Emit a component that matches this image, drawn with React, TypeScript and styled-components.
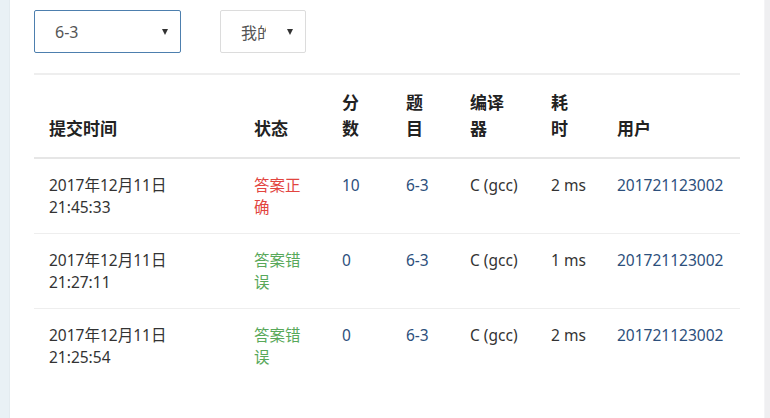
import React from "react";
import styled, { createGlobalStyle } from "styled-components";

const GlobalStyle = createGlobalStyle`
  html, body {
    margin: 0;
    padding: 0;
    background: #ffffff;
  }
  body {
    font-family: "Noto Sans", "Noto Sans CJK SC", sans-serif;
    color: #333;
  }
`;

const Page = styled.div`
  display: flex;
  width: 770px;
  height: 418px;
  overflow: hidden;
`;

const LeftRail = styled.div`
  width: 9px;
  flex-shrink: 0;
  background: #e9f1f5;
  border-right: 1px solid #e3ebef;
`;

const RightRail = styled.div`
  width: 5px;
  flex-shrink: 0;
  background: #efeff1;
  border-left: 1px solid #f4f4f6;
`;

const Card = styled.main`
  flex: 1;
  background: #fff;
  padding: 10px 24px 0 24px;
`;

const Filters = styled.div`
  display: flex;
  align-items: center;
  gap: 39px;
  height: 43px;
  margin-bottom: 20px;
`;

const Select = styled.div<{ $w: number; $active?: boolean }>`
  box-sizing: border-box;
  width: ${(p) => p.$w}px;
  height: 43px;
  display: flex;
  align-items: center;
  justify-content: space-between;
  padding: 0 10px 0 20px;
  border: 1px solid ${(p) => (p.$active ? "#4d7fae" : "#dcdcdc")};
  border-radius: 2px;
  font-size: 16px;
  color: #555;
`;

const SelectText = styled.span<{ $clip?: number }>`
  display: inline-block;
  white-space: nowrap;
  overflow: hidden;
  ${(p) => (p.$clip ? `width: ${p.$clip}px;` : "")}
`;

const Caret = styled.span`
  width: 0;
  height: 0;
  border-left: 3.5px solid transparent;
  border-right: 3.5px solid transparent;
  border-top: 6px solid #333;
  margin-right: 2px;
  margin-top: 1px;
`;

const Table = styled.table`
  width: 706px;
  border-collapse: collapse;
  table-layout: fixed;
  border-top: 2px solid #eeeeee;
`;

const Th = styled.th<{ $w: number }>`
  box-sizing: border-box;
  width: ${(p) => p.$w}px;
  text-align: left;
  vertical-align: bottom;
  padding: 15px;
  font-size: 17px;
  line-height: 26px;
  font-weight: 700;
  color: #222;
  border-bottom: 2px solid #e6e6e6;
`;

const Row = styled.tr`
  border-bottom: 1px solid #eeeeee;
  &:last-child {
    border-bottom: none;
  }
`;

const Td = styled.td<{ $tone?: "link" | "ok" | "bad" }>`
  padding: 15px;
  vertical-align: top;
  font-size: 15.5px;
  line-height: 22px;
  color: ${(p) =>
    p.$tone === "link"
      ? "#2c4f7c"
      : p.$tone === "ok"
      ? "#e2453f"
      : p.$tone === "bad"
      ? "#58a85a"
      : "#333"};
  white-space: nowrap;
`;

type Sub = {
  date: string;
  time: string;
  ok: boolean;
  score: string;
  cost: string;
};

const rows: Sub[] = [
  { date: "2017年12月11日", time: "21:45:33", ok: true, score: "10", cost: "2 ms" },
  { date: "2017年12月11日", time: "21:27:11", ok: false, score: "0", cost: "1 ms" },
  { date: "2017年12月11日", time: "21:25:54", ok: false, score: "0", cost: "2 ms" },
];

export default function App() {
  return (
    <>
      <GlobalStyle />
      <Page>
        <LeftRail />
        <Card>
          <Filters>
            <Select $w={147} $active>
              <SelectText>6-3</SelectText>
              <Caret />
            </Select>
            <Select $w={86}>
              <SelectText $clip={25}>我的</SelectText>
              <Caret />
            </Select>
          </Filters>
          <Table>
            <thead>
              <tr>
                <Th $w={205}>提交时间</Th>
                <Th $w={88}>状态</Th>
                <Th $w={64}>分<br />数</Th>
                <Th $w={64}>题<br />目</Th>
                <Th $w={81}>编译<br />器</Th>
                <Th $w={66}>耗<br />时</Th>
                <Th $w={138}>用户</Th>
              </tr>
            </thead>
            <tbody>
              {rows.map((r) => (
                <Row key={r.time}>
                  <Td>
                    {r.date}
                    <br />
                    {r.time}
                  </Td>
                  <Td $tone={r.ok ? "ok" : "bad"}>
                    {r.ok ? "答案正" : "答案错"}
                    <br />
                    {r.ok ? "确" : "误"}
                  </Td>
                  <Td $tone="link">{r.score}</Td>
                  <Td $tone="link">6-3</Td>
                  <Td>C (gcc)</Td>
                  <Td>{r.cost}</Td>
                  <Td $tone="link">201721123002</Td>
                </Row>
              ))}
            </tbody>
          </Table>
        </Card>
        <RightRail />
      </Page>
    </>
  );
}
